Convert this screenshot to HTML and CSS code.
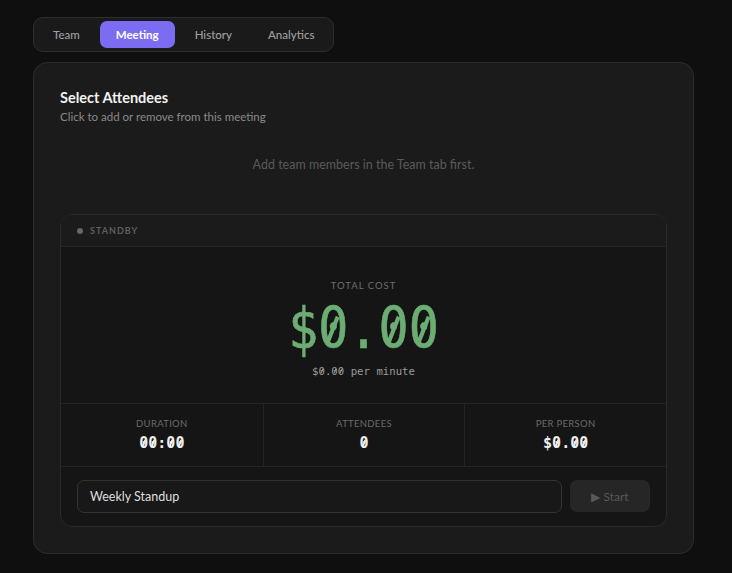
FILE: index.html
```html
<!DOCTYPE html>
<html>
<head>
<meta charset="utf-8">
<link rel="stylesheet" href="styles.css">
</head>
<body>
<div class="app">
  <nav class="tabs">
    <button class="tab">Team</button>
    <button class="tab active">Meeting</button>
    <button class="tab">History</button>
    <button class="tab">Analytics</button>
  </nav>
  <section class="card">
    <h2 class="title">Select Attendees</h2>
    <p class="subtitle">Click to add or remove from this meeting</p>
    <p class="empty">Add team members in the Team tab first.</p>
    <div class="meter">
      <div class="meter-head"><span class="dot"></span><span class="status">STANDBY</span></div>
      <div class="cost">
        <div class="cost-label">TOTAL COST</div>
        <div class="cost-value">$<span class="z">0</span>.<span class="z">0</span><span class="z">0</span></div>
        <div class="cost-rate">$<span class="z">0</span>.<span class="z">0</span><span class="z">0</span> per minute</div>
      </div>
      <div class="stats">
        <div class="stat"><div class="stat-label">DURATION</div><div class="stat-value"><span class="z">0</span><span class="z">0</span>:<span class="z">0</span><span class="z">0</span></div></div>
        <div class="stat"><div class="stat-label">ATTENDEES</div><div class="stat-value"><span class="z">0</span></div></div>
        <div class="stat"><div class="stat-label">PER PERSON</div><div class="stat-value">$<span class="z">0</span>.<span class="z">0</span><span class="z">0</span></div></div>
      </div>
      <div class="controls">
        <div class="input">Weekly Standup</div>
        <button class="start">▶ Start</button>
      </div>
    </div>
  </section>
</div>
</body>
</html>
```
FILE: styles.css
```css
* { box-sizing: border-box; }
html, body { margin: 0; padding: 0; }
body {
  background: #0f0f0f;
  font-family: "Lato", "Noto Sans", sans-serif;
  color: #e8e8e8;
  height: 573px;
  overflow: hidden;
}
.app {
  padding: 17px 38px 0 33px;
  display: flex;
  flex-direction: column;
  gap: 10px;
}
.tabs {
  align-self: flex-start;
  display: flex;
  gap: 4px;
  padding: 3px;
  background: #1a1a1a;
  border: 1px solid #2e2e2e;
  border-radius: 10px;
}
.tab {
  font-family: inherit;
  font-size: 11.5px;
  font-weight: 500;
  color: #a0a0a0;
  background: transparent;
  border: 0;
  border-radius: 7px;
  height: 27px;
  padding: 0 16px;
}
.tab.active { background: #7b6cf2; color: #fff; font-weight: 700; }
.card {
  width: 661px;
  height: 492px;
  background: #1b1b1b;
  border: 1px solid #2c2c2c;
  border-radius: 14px;
  padding: 26px 26px 26px 26px;
}
.title { margin: 0; font-size: 14.5px; line-height: 18px; font-weight: 700; color: #f2f2f2; }
.subtitle { margin: 2px 0 0; font-size: 11.5px; line-height: 15px; color: #8a8a8a; }
.empty { margin: 33px 0 0; text-align: center; font-size: 12.5px; line-height: 16px; color: #5a5a5a; }
.meter {
  margin-top: 41px;
  background: #151515;
  border: 1px solid #2a2a2a;
  border-radius: 12px;
  overflow: hidden;
}
.meter-head {
  height: 32px;
  display: flex;
  align-items: center;
  gap: 7px;
  padding-left: 16px;
  background: #1b1b1b;
  border-bottom: 1px solid #262626;
}
.dot { width: 6px; height: 6px; border-radius: 50%; background: #666; }
.status { font-size: 9px; font-weight: 700; letter-spacing: 1px; color: #5e5e5e; }
.cost {
  height: 157px;
  display: flex;
  flex-direction: column;
  align-items: center;
  padding-top: 33px;
  border-bottom: 1px solid #242424;
}
.cost-label { font-size: 9.5px; letter-spacing: 1px; color: #6e6e6e; }
.cost-value {
  font-family: "DejaVu Sans Mono", monospace;
  font-size: 50px;
  line-height: 60px;
  color: #6cad74;
  margin-top: 8px;
  transform: scaleY(1.14);
  -webkit-text-stroke: 0.6px #6cad74;
}
.cost-rate {
  font-family: "DejaVu Sans Mono", monospace;
  font-size: 10.7px;
  color: #9a9a9a;
  margin-top: 6px;
}
.z { position: relative; }
.z::after {
  content: "";
  position: absolute;
  left: 50%;
  top: 0.58em;
  width: 0.085em;
  height: 0.47em;
  background: currentColor;
  transform: translate(-50%, -50%) rotate(24deg);
}
.stat-value .z::after { width: 0.12em; height: 0.44em; }
.stats {
  display: grid;
  grid-template-columns: 1fr 1fr 1fr;
  height: 63px;
  border-bottom: 1px solid #242424;
}
.stat {
  display: flex;
  flex-direction: column;
  align-items: center;
  padding-top: 14px;
  border-left: 1px solid #242424;
}
.stat:first-child { border-left: 0; }
.stat-label { font-size: 9.5px; color: #6a6a6a; letter-spacing: 0.3px; }
.stat-value {
  font-family: "DejaVu Sans Mono", monospace;
  font-weight: bold;
  font-size: 15px;
  color: #eeeeee;
  margin-top: 5px;
}
.controls {
  display: flex;
  gap: 8px;
  padding: 13px 16px 13px 16px;
}
.input {
  flex: 1;
  height: 33px;
  display: flex;
  align-items: center;
  padding-left: 12px;
  font-size: 12.5px;
  color: #dedede;
  background: #181818;
  border: 1px solid #333;
  border-radius: 7px;
}
.start {
  width: 80px;
  height: 32px;
  font-family: inherit;
  font-size: 12px;
  color: #585858;
  background: #262626;
  border: 0;
  border-radius: 7px;
}
```
